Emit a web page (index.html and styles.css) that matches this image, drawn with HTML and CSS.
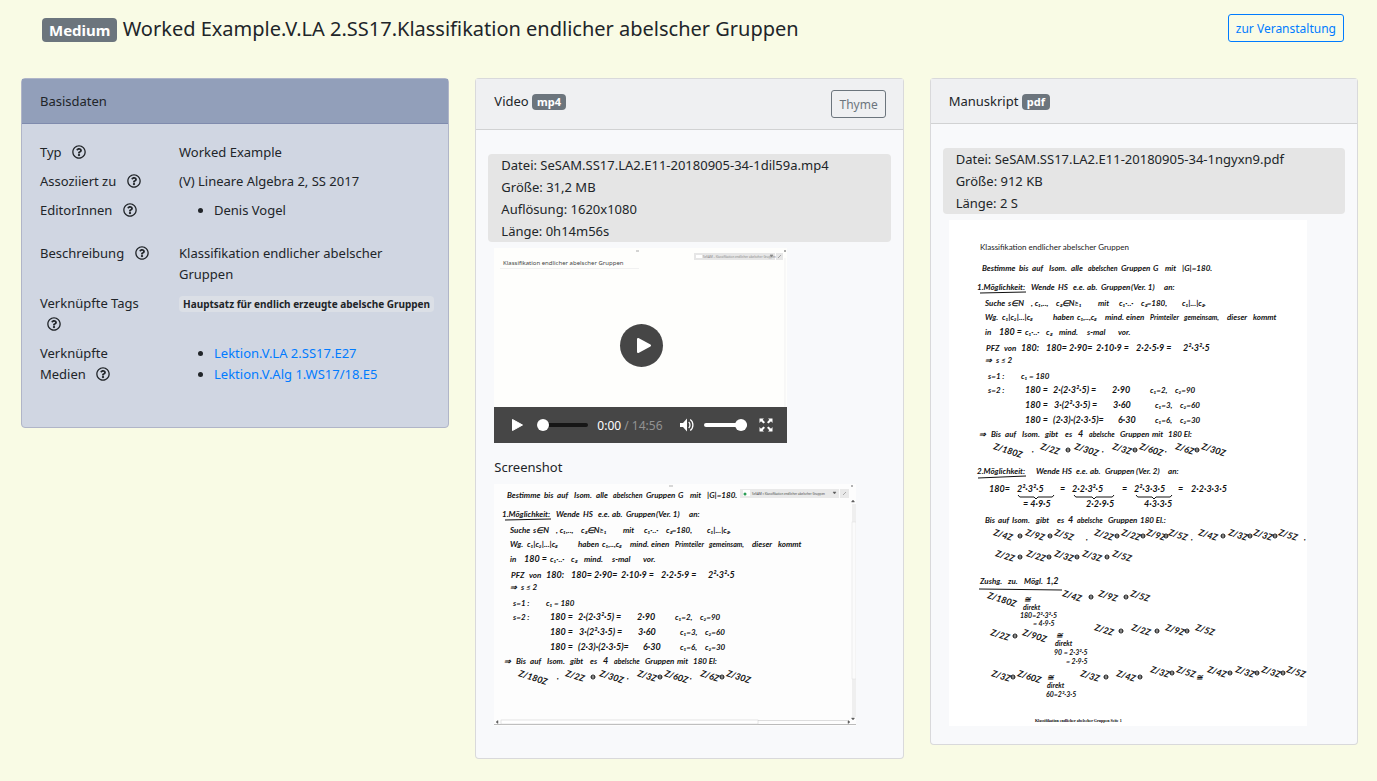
FILE: index.html
```html
<!DOCTYPE html>
<html lang="de">
<head>
<meta charset="utf-8">
<title>Worked Example.V.LA 2.SS17</title>
<link rel="stylesheet" href="styles.css">
</head>
<body>
<svg class="defs" aria-hidden="true">
  <symbol id="help" viewBox="0 0 512 512"><path d="M256 8C119.043 8 8 119.083 8 256c0 136.997 111.043 248 248 248s248-111.003 248-248C504 119.083 392.957 8 256 8zm0 448c-110.532 0-200-89.431-200-200 0-110.495 89.472-200 200-200 110.491 0 200 89.471 200 200 0 110.53-89.431 200-200 200zm107.244-255.2c0 67.052-72.421 68.084-72.421 92.863V300c0 6.627-5.373 12-12 12h-45.647c-6.627 0-12-5.373-12-12v-8.659c0-35.745 27.1-50.034 47.579-61.516 17.561-9.845 28.324-16.541 28.324-29.579 0-17.246-21.999-28.693-39.784-28.693-23.189 0-33.894 10.977-48.942 29.969-4.057 5.12-11.46 6.071-16.666 2.124l-27.824-21.098c-5.107-3.872-6.251-11.066-2.644-16.363C184.846 131.491 214.94 112 261.794 112c49.071 0 101.45 38.304 101.45 88.8zM298 368c0 23.159-18.841 42-42 42s-42-18.841-42-42 18.841-42 42-42 42 18.841 42 42z"/></symbol>
</svg>
<header class="page-header">
  <h1 class="title"><span class="badge badge-large">Medium</span> Worked Example.V.LA 2.SS17.Klassifikation endlicher abelscher Gruppen</h1>
  <a class="button button-primary" href="#veranstaltung">zur Veranstaltung</a>
</header>
<main class="cards">
  <section class="card card-blue">
    <h2 class="card-header">Basisdaten</h2>
    <dl class="facts">
      <dt>Typ <svg class="help"><use href="#help"/></svg></dt>
      <dd>Worked Example</dd>
      <dt>Assoziiert zu <svg class="help"><use href="#help"/></svg></dt>
      <dd>(V) Lineare Algebra 2, SS 2017</dd>
      <dt>EditorInnen <svg class="help"><use href="#help"/></svg></dt>
      <dd><ul class="list"><li>Denis Vogel</li></ul></dd>
      <dt>Beschreibung <svg class="help"><use href="#help"/></svg></dt>
      <dd>Klassifikation endlicher abelscher Gruppen</dd>
      <dt>Verknüpfte Tags <svg class="help"><use href="#help"/></svg></dt>
      <dd><span class="badge badge-light">Hauptsatz für endlich erzeugte abelsche Gruppen</span></dd>
      <dt>Verknüpfte Medien <svg class="help"><use href="#help"/></svg></dt>
      <dd><ul class="list"><li><a href="#e27">Lektion.V.LA 2.SS17.E27</a></li><li><a href="#e5">Lektion.V.Alg 1.WS17/18.E5</a></li></ul></dd>
    </dl>
  </section>

  <section class="card">
    <div class="card-header">
      <h2 class="card-title">Video <span class="badge">mp4</span></h2>
      <button class="button button-muted" type="button">Thyme</button>
    </div>
    <div class="card-body card-body-video">
      <div class="info">
        <div>Datei: SeSAM.SS17.LA2.E11-20180905-34-1dil59a.mp4</div>
        <div>Größe: 31,2 MB</div>
        <div>Auflösung: 1620x1080</div>
        <div>Länge: 0h14m56s</div>
      </div>
      <div class="player">
        <svg class="poster" viewBox="0 0 293 159">
          <rect width="293" height="159" fill="#fefefc"/>
          <text class="poster-title" x="9" y="17">Klassifikation endlicher abelscher Gruppen</text>
          <path d="M6 20.500H145M291 10V159" stroke="#f1f1f1"/>
          <rect x="200" y="5" width="81" height="7" fill="#e6e6e6"/><rect x="282" y="5" width="7" height="7" fill="#e6e6e6"/>
          <rect x="202" y="7" width="6" height="3" fill="#fff"/>
          <text class="poster-tab" x="209" y="10">SeSAM – Klassifikation endlicher abelscher Gruppen</text>
          <path d="M276 7h3l-1.500 2zM284 10l3-3M142 3h3M290 2l2 2M292 2l-2 2" stroke="#888" stroke-width=".7" fill="#888"/>
        </svg>
        <button class="big-play" type="button" aria-label="Abspielen"><svg viewBox="0 0 43 43"><path d="M18 15v13l12-6.500z" fill="#fff" stroke="#fff" stroke-width="2" stroke-linejoin="round"/></svg></button>
        <div class="controls">
          <button class="control" type="button" aria-label="Start"><svg viewBox="0 0 14 14"><path d="M2.500 1.500v11L12.500 7z" fill="#fff" stroke="#fff" stroke-linejoin="round"/></svg></button>
          <input class="range seek" type="range" min="0" max="100" value="0" aria-label="Position">
          <span class="time">0:00 <span class="total">/ 14:56</span></span>
          <button class="control" type="button" aria-label="Ton"><svg viewBox="0 0 14 14"><path d="M0 5h3l4-4.500v13L3 9H0z" fill="#fff"/><path d="M8.700 4c1.700 1.500 1.700 4.500 0 6M10.200 1.500c3.600 2.500 3.600 8.500 0 11" fill="none" stroke="#fff" stroke-width="1.300"/></svg></button>
          <input class="range volume" type="range" min="0" max="100" value="100" aria-label="Lautstärke">
          <button class="control" type="button" aria-label="Vollbild"><svg viewBox="0 0 14 14"><path d="M.5.500H5L3.700 1.800 6 4.200 4.500 5.500 2 3.300.5 5zM13.500.500H9l1.300 1.300L8 4.200l1.500 1.300L12 3.300 13.500 5zM.5 13.500H5l-1.300-1.300L6 9.800 4.500 8.500 2 10.700.5 9zM13.500 13.500H9l1.300-1.300L8 9.800l1.500-1.300 2.500 2.200L13.500 9z" fill="#fff"/></svg></button>
        </div>
      </div>
      <h3 class="subtitle">Screenshot</h3>
      <svg class="screenshot" viewBox="0 0 362 242">
        <rect width="362" height="242" fill="#fdfdfd"/>
        <g class="hand" id="screen-notes" transform="translate(-20 -37)"></g>
        <rect x="246" y="5" width="99" height="9" fill="#e9e9e9"/><rect x="346" y="5" width="9" height="9" fill="#e9e9e9"/>
        <rect x="249" y="6" width="7" height="6" fill="#fff"/><circle cx="251" cy="10" r="1.500" fill="#2a9d55"/>
        <text class="tab" x="258" y="11">SeSAM » Klassifikation endlicher abelscher Gruppen</text>
        <path d="M339 8h3l-1.500 2zM349 11l3-3M175 2h4M357 1l2 2M359 1l-2 2M359 16l1.500 2h-3zM359 236l1.500-2h-3zM2 238l2-1.500v3zM356 238l-2-1.500v3z" stroke="#666" stroke-width=".5" fill="#555"/>
        <rect x="358" y="20" width="4" height="213" fill="#efefef"/><rect x="358" y="38" width="4" height="157" fill="#fbfbfb" stroke="#ddd" stroke-width=".5"/>
        <path d="M7 236.500H354" stroke="#ddd"/><path d="M0 240.500H362" stroke="#bbb"/><rect x="7" y="236" width="257" height="4" fill="#fff" stroke="#ccc" stroke-width=".5"/>
      </svg>
    </div>
  </section>

  <section class="card">
    <div class="card-header"><h2 class="card-title">Manuskript <span class="badge">pdf</span></h2></div>
    <div class="card-body">
      <div class="info">
        <div>Datei: SeSAM.SS17.LA2.E11-20180905-34-1ngyxn9.pdf</div>
        <div>Größe: 912 KB</div>
        <div>Länge: 2 S</div>
      </div>
      <svg class="manuscript" viewBox="0 0 358 506">
        <rect width="358" height="506" fill="#fff"/>
        <text class="print" x="31" y="30">Klassifikation endlicher abelscher Gruppen</text>
        <g class="hand" id="page-notes"></g>
        <text class="footer" x="86" y="502">Klassifikation endlicher abelscher Gruppen Seite 1</text>
      </svg>
    </div>
  </section>
</main>
<script src="notes.js"></script>
</body>
</html>
```
FILE: notes.js
```js
// Each line: baseline y, then pairs of x and word.
const part1 = [
  [51, 33,'Bestimme', 70,'bis', 83,'auf', 100,'Isom.', 122,'alle', 139,'abelschen', 172,'Gruppen', 204,'G', 216,'mit', 233,'|G|=180.'],
  [70, 28,'1.Möglichkeit:', 82,'Wende', 109,'HS', 124,'e.e.', 138,'ab.', 152,'Gruppen', 182,'(Ver. 1)', 215,'an:'],
  [86, 36,'Suche', 59,'s∈N', 82,', c₁,..,', 107,'cₛ∈N≥₁', 149,'mit', 170,'c₁·..·', 192,'cₛ=180,', 233,'c₁|...|cₛ.'],
  [100, 36,'Wg.', 53,'c₁|c₂|...|cₛ', 104,'haben', 128,'c₁,..,cₛ', 156,'mind.', 177,'einen', 201,'Primteiler', 235,'gemeinsam,', 278,'dieser', 304,'kommt'],
  [115, 36,'in', 50,'180 =', 76,'c₁·..·', 97,'cₛ', 110,'mind.', 138,'s-mal', 169,'vor.'],
  [131, 37,'PFZ', 55,'von', 72,'180:', 97,'180=', 120,'2·90=', 147,'2·10·9 =', 187,'2·2·5·9 =', 234,'2²·3²·5'],
  [143, 36,'⇒', 47,'s ≤ 2'],
  [159, 39,'s=1 :', 72,'c₁ = 180'],
  [173, 39,'s=2 :', 76,'180 =', 104,'2·(2·3²·5) =', 163,'2·90', 201,'c₁=2,', 226,'c₂=90'],
  [188, 76,'180 =', 105,'3·(2²·3·5) =', 164,'3·60', 206,'c₁=3,', 231,'c₂=60'],
  [203, 76,'180 =', 104,'(2·3)·(2·3·5)=', 169,'6·30', 206,'c₁=6,', 231,'c₂=30'],
  [217, 30,'⇒', 42,'Bis', 56,'auf', 73,'Isom.', 96,'gibt', 116,'es', 129,'4', 140,'abelsche', 171,'Gruppen', 203,'mit', 219,'180 El:'],
  [232, 83,',', 153,',', 216,',']
];
const part2 = [
  [254, 28,'2.Möglichkeit:', 87,'Wende', 113,'HS', 127,'e.e.', 141,'ab.', 156,'Gruppen', 187,'(Ver. 2)', 219,'an:'],
  [272, 40,'180=', 68,'2²·3²·5', 111,'=', 123,'2·2·3²·5', 173,'=', 185,'2²·3·3·5', 229,'=', 242,'2·2·3·3·5'],
  [287, 74,'= 4·9·5', 137,'2·2·9·5', 195,'4·3·3·5'],
  [303, 36,'Bis', 49,'auf', 63,'Isom.', 87,'gibt', 108,'es', 119,'4', 128,'abelsche', 159,'Gruppen', 191,'180 El.:'],
  [320, 137,',', 242,',', 355,','],
  [364, 31,'Zushg.', 59,'zu.', 75,'Mögl.', 97,'1,2'],
  [382, 75,'≅'],
  [418, 107,'≅'],
  [460, 98,'≅', 247,'≅']
];
const remarks = [
  [390, 74,'direkt'],
  [398, 71,'180=2²·3²·5'],
  [406, 84,'= 4·9·5'],
  [426, 106,'direkt'],
  [435, 105,'90 = 2·3²·5'],
  [444, 117,'= 2·9·5'],
  [468, 98,'direkt'],
  [477, 97,'60=2²·3·5']
];
// Quotient rows: y, then pairs of x and order; '+' stands for a direct sum sign.
const rows1 = [[229, 44,'180', 91,'2', 116,'+', 125,'30', 163,'3', 183,'+', 190,'60', 226,'6', 245,'+', 252,'30']];
const rows2 = [
  [315, 44,'4', 68,'+', 76,'9', 98,'+', 105,'5', 145,'2', 165,'+', 172,'2', 191,'+', 197,'9', 214,'+', 219,'5', 249,'4', 271,'+', 279,'3', 298,'+', 304,'3', 323,'+', 329,'5'],
  [336, 46,'2', 68,'+', 77,'2', 97,'+', 105,'3', 125,'+', 133,'3', 155,'+', 163,'5'],
  [378, 38,'180'],
  [376, 113,'4', 139,'+', 149,'9', 174,'+', 181,'5'],
  [415, 41,'2', 63,'+', 73,'90'],
  [410, 145,'2', 169,'+', 182,'2', 205,'+', 216,'9', 235,'+', 246,'5'],
  [456, 42,'3', 61,'+', 68,'60', 131,'3', 154,'+', 167,'4', 188,'+'],
  [452, 201,'3', 220,'+', 227,'5', 258,'4', 278,'+', 286,'3', 305,'+', 312,'3', 331,'+', 337,'5']
];
const NS = 'http://www.w3.org/2000/svg';

function add(parent, name, attributes, text) {
  const node = document.createElementNS(NS, name);
  for (const key in attributes) node.setAttribute(key, attributes[key]);
  if (text) node.textContent = text;
  parent.append(node);
}

function pairs(line, draw) {
  for (let i = 1; i < line.length; i += 2) draw(line[i], line[0], line[i + 1]);
}

function kind(word) {
  if (/^[abg][a-zö]{6}/.test(word) || word === 'Primteiler') return 'long';
  return /[·=\d]/.test(word) && !/[a-zA-Z|]/.test(word) ? 'formula' : 'word';
}

function write(target, lines, quotients, strokes) {
  lines.forEach(line => pairs(line, (x, y, word) => add(target, 'text', { x, y, class: kind(word) }, word)));
  quotients.forEach(line => pairs(line, (x, y, order) => {
    if (order === '+') {
      add(target, 'circle', { cx: x + 3, cy: y + 1, r: 2 });
      add(target, 'path', { d: `M${x + 1} ${y + 1}h4` });
    } else {
      add(target, 'text', { x, y, class: 'quotient', transform: `rotate(18 ${x} ${y})` }, `Z/${order}Z`);
    }
  }));
  add(target, 'path', { d: strokes });
}

const brace = (x, w) => `M${x} 275q1 3 5 2h${w / 2 - 7}l2 2l2-2h${w / 2 - 7}q4 1 5-2`;
const page = document.getElementById('page-notes');
write(document.getElementById('screen-notes'), part1, rows1, 'M31 73L77 72');
write(page, part1, rows1, 'M31 73L77 72');
write(page, part2, rows2, 'M29 258L77 256M30 369L113 370' + brace(69, 36) + brace(125, 40) + brace(187, 36));
remarks.forEach(line => pairs(line, (x, y, word) => add(page, 'text', { x, y, class: 'remark' }, word)));
```
FILE: styles.css
```css
* { box-sizing: border-box; }
body {
  margin: 0;
  background: #f9fbe5;
  color: #212529;
  font: 13px/21px "Noto Sans", "Open Sans", sans-serif;
}
h1, h2, h3, dl, dd, ul { margin: 0; padding: 0; font-weight: 400; }
h2, h3 { font-size: 13px; }
a { color: #007bff; text-decoration: none; }
button { font-family: inherit; cursor: pointer; }
.defs { position: absolute; width: 0; height: 0; }

.page-header {
  display: flex;
  justify-content: space-between;
  align-items: flex-start;
  padding: 14px 33px 36px 42px;
}
.title { font-size: 20px; line-height: 30px; margin-bottom: -2px; }
.badge {
  display: inline-block;
  padding: 0 5px;
  border-radius: 4px;
  background: #6c757d;
  color: #fff;
  font-size: 10px;
  font-weight: 700;
  line-height: 16px;
  white-space: nowrap;
}
.badge-large { padding: 0 7px; font-size: 15px; line-height: 24px; }
.badge-light { padding: 0 4px; background: #dbdfe6; color: #212529; }
.card-title .badge { font-size: 11px; }
.button {
  display: inline-block;
  padding: 4px 7px 2px;
  border: 1px solid;
  border-radius: 3px;
  background: transparent;
  font-size: 12px;
  line-height: 20px;
}
.button-primary { color: #007bff; }
.button-muted { color: #6c757d; }

.cards {
  display: grid;
  grid-template-columns: repeat(3, minmax(0, 1fr));
  align-items: start;
  gap: 26px;
  padding: 0 19px 20px 21px;
}
.card {
  border: 1px solid rgba(0, 0, 0, .125);
  border-radius: 4px;
  background: #f8f9fb;
}
.card-blue { border-color: #b0b5c8; background: #d0d6e2; }
.card-header {
  display: flex;
  justify-content: space-between;
  align-items: flex-start;
  padding: 11px 17px 11px 18px;
  border-bottom: 1px solid rgba(0, 0, 0, .125);
  background: #eff0f2;
  line-height: 22px;
}
.card-blue .card-header { border-color: #7f8bad; background: #929fba; }
.card-body { padding: 25px 18px 18px; }
.card-body-video { padding-bottom: 32px; }

.facts {
  display: grid;
  grid-template-columns: 111px 1fr;
  gap: 8px 28px;
  padding: 18px 36px 28px 18px;
}
.help { width: 14px; height: 14px; margin-left: 7px; vertical-align: -2px; fill: #212529; }
.list { margin-bottom: 14px; padding-left: 35px; }

.info {
  margin: 0 -6px 6px;
  padding: 0 13px;
  border-radius: 4px;
  background: #e5e5e5;
  line-height: 22px;
}
.card-body .info { margin-top: -1px; }

.player { position: relative; width: 293px; max-width: 100%; }
.poster, .screenshot, .manuscript { display: block; max-width: 100%; }
.poster { width: 293px; }
.poster-title { font-size: 6px; fill: #444; }
.poster-tab { font-size: 3px; fill: #888; }
.big-play {
  position: absolute;
  left: calc(50% - 21px);
  top: 76px;
  width: 43px;
  height: 43px;
  padding: 0;
  border: 0;
  border-radius: 50%;
  background: #464646;
}
.controls {
  display: flex;
  align-items: center;
  height: 36px;
  padding: 0 14px 0 16px;
  background: #464646;
}
.control { width: 14px; height: 14px; padding: 0; border: 0; background: none; }
.control svg, .big-play svg { display: block; }
.range { appearance: none; height: 12px; margin: 0; background: none; }
.range::-webkit-slider-runnable-track { height: 4px; border-radius: 2px; background: #161616; }
.range::-webkit-slider-thumb {
  appearance: none;
  width: 12px;
  height: 12px;
  margin-top: -4px;
  border-radius: 50%;
  background: #fff;
}
.seek { width: 51px; margin: 0 9px 0 13px; }
.volume { width: 43px; margin: 0 12px 0 10px; }
.volume::-webkit-slider-runnable-track { background: #fff; }
.time { flex: 1; color: #fff; font-size: 12px; white-space: nowrap; }
.total { color: #939393; }
.subtitle { margin: 14px 0 6px; }

.screenshot { width: 362px; }
.manuscript { width: 358px; }
.hand { font: italic 700 8px Lato, sans-serif; fill: #111; }
.hand .formula, .hand .quotient { font-size: 9px; }
.hand .long, .hand .remark { font-size: 7px; }
.hand path, .hand circle { fill: none; stroke: #111; stroke-width: 1; }
.hand circle { fill: #fff; }
.print { font: 8px Lato, sans-serif; fill: #222; }
.tab { font-size: 3px; fill: #444; }
.footer { font: 700 4px "Liberation Serif", serif; }
```
